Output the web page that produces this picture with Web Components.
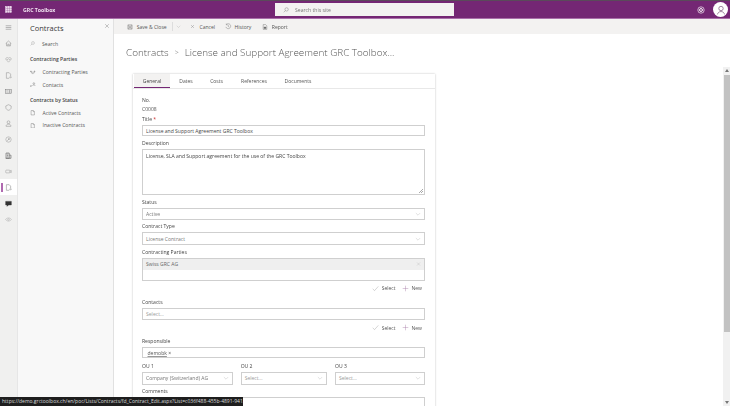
<!DOCTYPE html>
<html><head><meta charset="utf-8"><title>GRC Toolbox</title>
<style>
html,body{margin:0;padding:0;width:730px;height:406px;overflow:hidden;background:#fff;font-family:"Open Sans","Noto Sans",sans-serif;color:#333}
</style></head><body>
<grc-app></grc-app>
<script>
const ic={
waffle:'<g fill="currentColor"><rect x="1" y="1" width="2" height="2"/><rect x="4" y="1" width="2" height="2"/><rect x="7" y="1" width="2" height="2"/><rect x="1" y="4" width="2" height="2"/><rect x="4" y="4" width="2" height="2"/><rect x="7" y="4" width="2" height="2"/><rect x="1" y="7" width="2" height="2"/><rect x="4" y="7" width="2" height="2"/><rect x="7" y="7" width="2" height="2"/></g>',
menu:'<path d="M1 2.5h8M1 5h8M1 7.5h8"/>',
home:'<path d="M1 5 5 1.5 9 5M2.2 4.2V8.5h5.6V4.2M4 8.5V6h2v2.5"/>',
heart:'<path d="M5 8.8 1.5 5C.3 3.4 2.5 1 5 3c2.5-2 4.7.4 3.5 2Z"/><path d="M2.5 5h1.5l1-1 1 1h1.5"/>',
doc:'<path d="M2 1h4l2 2v6H2Z"/><path d="M6 1v2h2"/>',
docarrow:'<path d="M2 1h4l2 2v3M2 1v8h4"/><path d="M6 7.5h3M8 6.5l1 1-1 1"/>',
card:'<rect x="1" y="2" width="8" height="6"/><circle cx="6.5" cy="4.3" r="1"/><path d="M5 7c0-1 3-1 3 0M2 4h2M2 6h2"/>',
shield:'<path d="M5 1 8.8 2.8V5.2C8.8 7 7 8.5 5 9 3 8.5 1.2 7 1.2 5.2V2.8Z"/>',
person:'<circle cx="5" cy="3.2" r="2"/><path d="M1.5 9c0-4.2 7-4.2 7 0Z"/>',
clock:'<circle cx="5" cy="5" r="3.8"/><path d="M3 7 7 3M5 2.6V5h2"/>',
bld:'<path d="M1.5 9V1.5h4.5V9ZM6 4.5h2.5V9H1M3 3h1.5M3 5h1.5M3 7h1.5" stroke-width="1.1"/>',
tag:'<rect x="1" y="3" width="6" height="4" rx="1"/><path d="M7 4.2 9 3.5v3L7 5.8"/>',
chat:'<path d="M1 2h8v5H5L3 9V7H1Z" fill="currentColor"/>',
eye:'<path d="M.8 5C3 2 7 2 9.2 5 7 8 3 8 .8 5Z"/><circle cx="5" cy="5" r="1.2"/>',
search:'<circle cx="6" cy="4" r="2.8"/><path d="M4 6 1.2 8.8"/>',
close:'<path d="M2 2l6 6M8 2 2 8"/>',
chev:'<path d="M1.5 3.5 5 7l3.5-3.5"/>',
save:'<path d="M1.5 1.5h7v7h-7Z"/><path d="M3 1.5v3h4v-3M3 8.5V6h4v2.5"/>',
hist:'<path d="M2 2.5A3.8 3.8 0 1 1 1.3 6M2 .8v2h2M5 3v2.3l1.6 1"/>',
report:'<path d="M2 1h4l2 2v6H2Z" /><path d="M3.5 5h3v2.5h-3Z" fill="currentColor"/>',
help:'<circle cx="5" cy="5" r="4"/><circle cx="5" cy="5" r="1.8" stroke-width="1.2"/>',
user:'<circle cx="5" cy="3.5" r="2.2"/><path d="M1.5 9.4C2 5.6 8 5.6 8.5 9.4"/>',
check:'<path d="M1 5.5 3.7 8 9 2"/>',
plus:'<path d="M5 1v8M1 5h8"/>',
parties:'<path d="M1 3l2 1.2V6M9 3 7 4.2V6M4 4h2M3.5 6.5h3"/><circle cx="1.8" cy="2.5" r=".9"/><circle cx="8.2" cy="2.5" r=".9"/>',
contacts:'<circle cx="7" cy="2.8" r="1.5"/><path d="M4.5 7c0-2.3 5-2.3 5 0M1 8l2-2M3 8H1V6"/>'
};
const svg=(n,s=8,c='currentColor',w=.8)=>`<svg width="${s}" height="${s}" viewBox="0 0 10 10" fill="none" stroke="${c}" stroke-width="${w}" style="display:block;flex:none;color:${c}">${ic[n]}</svg>`;
function def(name,css,html){customElements.define(name,class extends HTMLElement{
 constructor(){super();this.attachShadow({mode:'open'})}
 connectedCallback(){this.shadowRoot.innerHTML=`<style>${css}</style>`+(typeof html==='function'?html(this):html)}
})}
const P='#742774';

def('grc-top',`:host{display:flex;align-items:center;height:17px;background:${P};border-top:1px solid #5a4a5a;border-bottom:1px solid #a96fa9;color:#fff;position:relative;box-sizing:content-box;flex:none}
.w{width:17px;display:flex;justify-content:center;color:#e8cfe8}
.t{font:700 5.2px "Open Sans";margin-left:6px;width:252px;color:#f0e2f0}
.s{width:179px;height:13px;background:#f3f2f1;display:flex;align-items:center;color:#777;font-size:5.1px;box-sizing:border-box;padding-left:8px;gap:6px}
.r{margin-left:auto;display:flex;align-items:center;gap:8px;padding-right:2px}
.a{width:15px;height:15px;border-radius:50%;background:#fff;display:flex;align-items:center;justify-content:center}`,
`<div class="w">${svg('waffle',7,'#ecd9ec')}</div><div class="t">GRC Toolbox</div>
<div class="s">${svg('search',6,'#777',.7)}<span>Search this site</span></div>
<div class="r">${svg('help',8,'#fff',.8)}<div class="a">${svg('user',10,'#8a6a8a',.8)}</div></div>`);

def('grc-rail',`:host{display:flex;flex-direction:column;width:17px;background:#f0f0ef;flex:none;box-sizing:border-box;align-items:stretch}
div{height:16px;display:flex;align-items:center;justify-content:center;position:relative}
.on{background:#fff}
.on::before{content:"";position:absolute;left:1px;top:3.5px;bottom:3px;width:2px;background:#b06ab0}`,
()=>[['menu','#777'],['home','#888'],['heart','#999'],['docarrow','#888'],['card','#777'],['shield','#888'],['person','#888'],['clock','#999'],['bld','#777'],['tag','#999'],['docarrow','#777',1],['chat','#333'],['eye','#aaa']].map(([n,c,on])=>`<div class="${on?'on':''}">${svg(n,7,c,.7)}</div>`).join(''));

def('grc-pane',`:host{display:block;width:97px;flex:none;background:#f8f8f8;border-left:1px solid #e6e6e6;border-right:1px solid #e1e1e1;box-sizing:border-box;padding:0 0 0 12px;color:#333;font-size:5.1px;position:relative}
h1{font:400 7.5px "Open Sans";margin:0;height:18px;box-sizing:border-box;color:#3a3a3a;line-height:18px}
.x{position:absolute;right:3.5px;top:3.5px}
.i{display:flex;align-items:center;height:12.3px;gap:7px;color:#555}
.h{font-weight:600;color:#444;height:11px;line-height:11px;margin-top:4.3px;margin-bottom:.8px}`,
`<h1>Contracts</h1><div class="x">${svg('close',6,'#777',.7)}</div>
<div class="i" style="margin-top:.85px">${svg('search',5,'#777',.6)}<span>Search</span></div>
<div class="h">Contracting Parties</div>
<div class="i">${svg('parties',5.5,'#666',.7)}<span>Contracting Parties</span></div>
<div class="i">${svg('contacts',5.5,'#666',.7)}<span>Contacts</span></div>
<div class="h">Contracts by Status</div>
<div class="i">${svg('doc',5.5,'#666',.7)}<span>Active Contracts</span></div>
<div class="i">${svg('doc',5.5,'#666',.7)}<span>Inactive Contracts</span></div>`);

def('grc-cmd',`:host{display:flex;align-items:center;height:15.3px;background:#f3f2f1;font-size:5.05px;color:#555;padding-left:13px;flex:none}
span{display:flex;align-items:center;gap:3.7px}
.sep{width:1px;height:9px;background:#ddd;margin:0 2.8px 0 5.5px}`,
`<span>${svg('save',6,'#666',.7)}Save &amp; Close</span><i class="sep"></i>${svg('chev',5,'#aaa',.7)}
<span style="margin-left:9.5px;gap:4px">${svg('close',5,'#777',.7)}Cancel</span>
<span style="margin-left:10px;gap:3px">${svg('hist',6.5,'#777',.7)}History</span>
<span style="margin-left:10.7px;gap:3.7px">${svg('report',6,'#666',.7)}Report</span>`);

def('grc-crumb',`:host{display:flex;align-items:center;gap:5px;height:40px;padding-left:12px;padding-bottom:4px;box-sizing:border-box;font:300 9.9px "Open Sans";color:#555;white-space:nowrap;flex:none}
i{font-style:normal;font-size:7px;margin:0 1px;color:#777}`,`<span>Contracts</span><i>&gt;</i><span>License and Support Agreement GRC Toolbox...</span>`);

def('grc-tabs',`:host{display:flex;height:14px;border-bottom:1px solid #e8e8e8;font-size:5px;color:#555;padding-left:1px;box-sizing:content-box}
span{display:flex;align-items:center;justify-content:center;height:14px;box-sizing:border-box}
.on{background:#f3f2f1;border-bottom:1px solid ${P};width:36px;color:#444}`,
`<span class="on">General</span><span style="width:32px">Dates</span><span style="width:29px">Costs</span><span style="width:46px">References</span><span style="width:42px">Documents</span>`);

def('grc-field',`:host{display:block;font-size:5.05px;color:#444}
.l{height:5px;line-height:5px;margin-bottom:var(--lb,3px);font-weight:500;color:#444}
.l b{color:#c33;font-weight:400}
.b{box-sizing:border-box;border:1px solid #cfcfcf;height:var(--h,12px);display:flex;align-items:center;padding-left:3px;color:#444;position:relative;background:#fff;white-space:nowrap}
.b.ta{align-items:flex-start;padding-top:3px}
.b.ph{color:#999}
.b.pl{color:#777}
.b svg{position:absolute;right:3px;top:50%;transform:translateY(-50%)}
.v{height:5px;line-height:5px;margin-top:3.5px;color:#555}
.grip{position:absolute;right:1px;bottom:1px;width:4px;height:4px;background:linear-gradient(135deg,transparent 50%,#aaa 50%,#aaa 60%,transparent 60%,transparent 75%,#aaa 75%,#aaa 85%,transparent 85%)}
.tag{background:#efefef;display:flex;height:11px;align-items:center;padding:0 3px;box-sizing:border-box;color:#666;position:relative;width:100%}
u{color:#555;text-decoration-color:#999}`,
el=>{const a=n=>el.getAttribute(n);const lab=`<div class="l">${a('label')}${a('req')!==null?' <b>*</b>':''}</div>`;
 const t=a('type'),v=a('value')||'';
 if(t==='static')return lab+`<div class="v">${v}</div>`;
 if(t==='select')return lab+`<div class="b ${a('ph')!==null?'ph':'pl'}">${v}${svg('chev',6,'#aaa',.6)}</div>`;
 if(t==='area')return lab+`<div class="b ta">${v}<i class="grip"></i></div>`;
 if(t==='tag')return lab+`<div class="b ta" style="padding:0"><div class="tag">${v}${svg('close',5,'#aaa',.6)}</div></div>`;
 if(t==='user')return lab+`<div class="b" style="padding-left:4.5px"><u>${v}</u>&nbsp;×</div>`;
 return lab+`<div class="b ${a('ph')!==null?'ph':''}">${v}</div>`;});

def('grc-acts',`:host{display:flex;justify-content:flex-end;align-items:center;height:12px;font-size:5px;color:#555;padding-right:3px;gap:3px}
span{margin-right:3px}`,`${svg('check',7,'#999',.6)}<span>Select</span>${svg('plus',7,'#a77aa7',.6)}<span style="margin-right:0">New</span>`);

def('grc-form',`:host{display:block;width:302px;height:340px;margin-left:19px;background:#fff;box-shadow:0 0 2px rgba(0,0,0,.25);flex:none}
.f{padding:9px 10px 0 9px;display:flex;flex-direction:column}
.g{display:grid;grid-template-columns:90.7px 86.4px 90px;justify-content:space-between}`,
`<grc-tabs></grc-tabs><div class="f">
<grc-field label="No." type="static" value="C0008"></grc-field>
<grc-field style="margin-top:5px;--h:11.5px" label="Title" req value="License and Support Agreement GRC Toolbox"></grc-field>
<grc-field style="margin-top:4.5px;--h:46px" type="area" label="Description" value="License, SLA and Support agreement for the use of the GRC Toolbox"></grc-field>
<grc-field style="margin-top:5px;--h:12px" type="select" label="Status" value="Active"></grc-field>
<grc-field style="margin-top:4.5px;--h:12.5px" type="select" label="Contract Type" value="License Contract"></grc-field>
<grc-field style="margin-top:5px;--h:23px" type="tag" label="Contracting Parties" value="Swiss GRC AG"></grc-field>
<grc-acts style="margin-top:1.7px"></grc-acts>
<grc-field style="margin-top:5.3px;--h:12.7px" label="Contacts" ph value="Select..."></grc-field>
<grc-acts style="margin-top:1.3px"></grc-acts>
<grc-field style="margin-top:5.7px;--h:11px" type="user" label="Responsible" value="demobk"></grc-field>
<div class="g" style="margin-top:5.3px">
<grc-field style="--h:13px" type="select" label="OU 1" value="Company (Switzerland) AG"></grc-field>
<grc-field style="--h:13px" type="select" ph label="OU 2" value="Select..."></grc-field>
<grc-field style="--h:13px" type="select" ph label="OU 3" value="Select..."></grc-field>
</div>
<grc-field style="margin-top:4px;--h:30px" type="area" label="Comments" value=""></grc-field>
</div>`);

def('grc-bar',`:host{display:block;width:7px;flex:none;background:#f1f1f1;margin-top:32.7px;position:relative}
.u{position:absolute;top:2px;left:1.5px;width:0;height:0;border:2px solid transparent;border-bottom:3px solid #777;border-top:0}
.t{margin:8px 0.5px 0 1px;height:257px;background:#c2c2c2}
.a{position:absolute;bottom:2px;left:1.5px;width:0;height:0;border:2px solid transparent;border-top:3px solid #777;border-bottom:0}`,`<i class="u"></i><div class="t"></div><i class="a"></i>`);

def('grc-tip',`:host{position:absolute;left:0;bottom:0;height:9px;width:243px;background:#1e1e1e;color:#dcdcdc;font-size:5px;line-height:9px;padding-left:2px;box-sizing:border-box;white-space:nowrap;overflow:hidden}`,
`https://demo.grctoolbox.ch/en/poc/Lists/Contracts/fd_Contract_Edit.aspx?List=c036f488-455b-4891-941...`);

def('grc-app',`:host{display:flex;flex-direction:column;width:730px;height:406px;overflow:hidden;position:relative;filter:blur(.3px)}
.m{display:flex;flex:1;min-height:0}
.c{flex:1;display:flex;flex-direction:column;min-width:0;overflow:hidden}
.w{flex:1;display:flex;min-height:0}
.s{flex:1;min-width:0;display:flex;flex-direction:column;overflow:hidden}`,
`<grc-top></grc-top><div class="m"><grc-rail></grc-rail><grc-pane></grc-pane>
<div class="c"><grc-cmd></grc-cmd><div class="w"><div class="s"><grc-crumb></grc-crumb><grc-form></grc-form></div><grc-bar></grc-bar></div></div></div><grc-tip></grc-tip>`);
</script></body></html>
